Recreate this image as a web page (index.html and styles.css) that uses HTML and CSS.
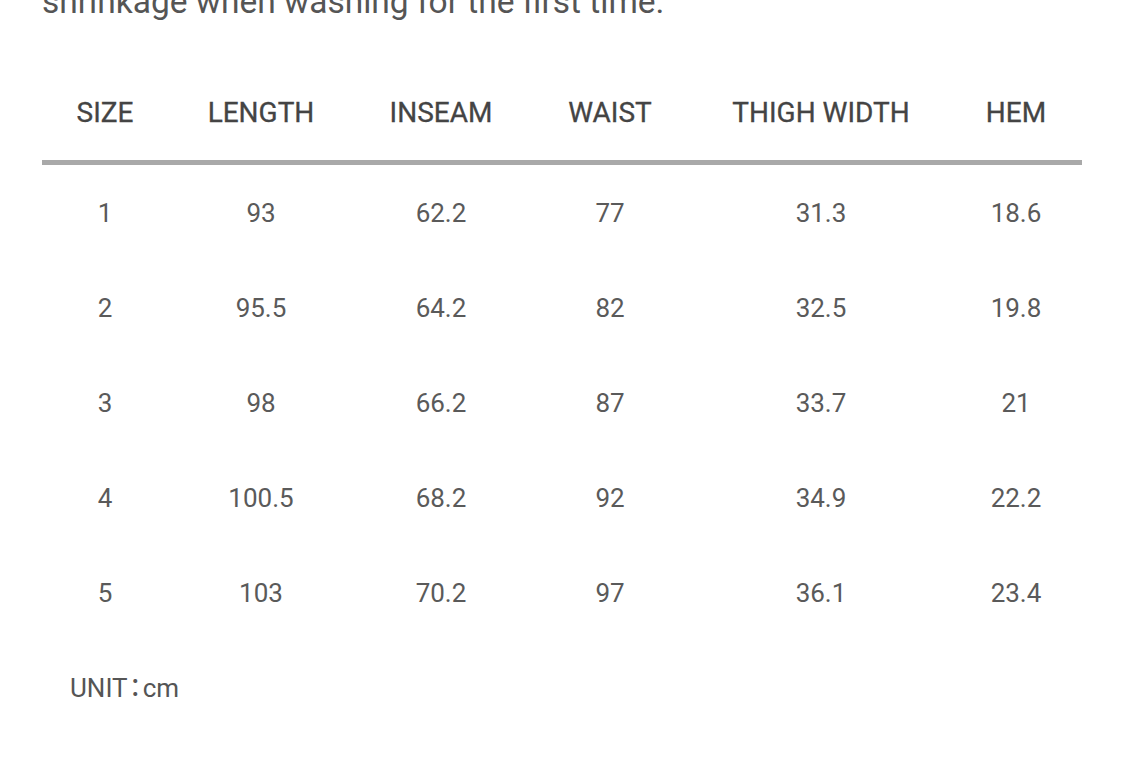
FILE: index.html
```html
<!DOCTYPE html>
<html>
<head>
<meta charset="utf-8">
<link rel="stylesheet" href="styles.css">
</head>
<body>
<div class="page">
  <p class="note">shrinkage when washing for the first time.</p>
  <table class="sizes">
    <colgroup>
      <col class="c1"><col class="c2"><col class="c3"><col class="c4"><col class="c5"><col class="c6">
    </colgroup>
    <thead>
      <tr><th>SIZE</th><th>LENGTH</th><th>INSEAM</th><th>WAIST</th><th>THIGH WIDTH</th><th>HEM</th></tr>
    </thead>
    <tbody>
      <tr><td>1</td><td>93</td><td>62.2</td><td>77</td><td>31.3</td><td>18.6</td></tr>
      <tr><td>2</td><td>95.5</td><td>64.2</td><td>82</td><td>32.5</td><td>19.8</td></tr>
      <tr><td>3</td><td>98</td><td>66.2</td><td>87</td><td>33.7</td><td>21</td></tr>
      <tr><td>4</td><td>100.5</td><td>68.2</td><td>92</td><td>34.9</td><td>22.2</td></tr>
      <tr><td>5</td><td>103</td><td>70.2</td><td>97</td><td>36.1</td><td>23.4</td></tr>
    </tbody>
  </table>
  <p class="unit">UNIT<span class="colon">：</span>cm</p>
</div>
</body>
</html>
```
FILE: styles.css
```css
html, body {
  margin: 0;
  padding: 0;
  background: #ffffff;
}
body {
  font-family: Roboto, "Noto Sans CJK JP", sans-serif;
  overflow: hidden;
}
.page {
  padding: 0 42px;
}
.note {
  margin: -18px 0 0 0;
  font-size: 33.5px;
  line-height: 40px;
  color: #555555;
}
.sizes {
  margin-top: 42px;
  width: 1040px;
  border-collapse: collapse;
  table-layout: fixed;
}
.c1 { width: 126px; }
.c2 { width: 186px; }
.c3 { width: 174px; }
.c4 { width: 164px; }
.c5 { width: 258px; }
.c6 { width: 132px; }
.sizes th {
  height: 96px;
  padding: 0;
  font-size: 28px;
  font-weight: 400;
  color: #444444;
  text-align: center;
  vertical-align: middle;
  border-bottom: 5px solid #a9a9a9;
  -webkit-text-stroke: 0.3px #444444;
}
.sizes td {
  height: 95px;
  padding: 0;
  font-size: 26px;
  color: #5a5a5a;
  text-align: center;
  vertical-align: middle;
}
.unit {
  margin: 0;
  padding: 29px 0 0 28px;
  font-size: 26px;
  line-height: 34px;
  color: #555555;
}
.colon {
  display: inline-flex;
  justify-content: center;
  width: 15px;
  font-family: "Noto Sans CJK JP", sans-serif;
}
```
